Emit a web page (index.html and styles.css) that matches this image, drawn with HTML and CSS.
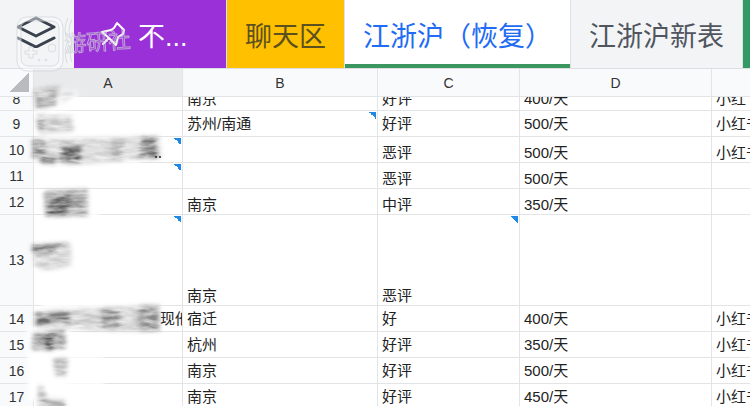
FILE: index.html
```html
<!DOCTYPE html>
<html lang="zh-CN">
<head>
    <meta charset="UTF-8">
    <meta name="viewport" content="width=device-width, initial-scale=1.0">
    <title>江浙沪（恢复）</title>
    <link rel="stylesheet" href="styles.css">
</head>
<body>
    <nav class="tabs">
        <button class="tab tab-layers" type="button" aria-label="工作表列表">
            <svg width="40" height="32" viewBox="0 0 40 32" fill="none" stroke="#39414d" stroke-width="3" stroke-linejoin="round" stroke-linecap="round">
                <path d="M19 2 L37 11 L19 20 L1 11 Z"/>
                <path d="M1 22 L19 31 L37 22"/>
            </svg>
        </button>
        <button class="tab tab-purple" type="button">
            <svg width="26" height="26" viewBox="0 0 26 26" fill="none" stroke="#fff" stroke-width="2" stroke-linejoin="round" stroke-linecap="round">
                <path d="M17 2 L24 9 L23 13 L18 16 L16 24 L9 17 L2 11 L11 9 L14 7 Z M8 18 L3 23"/>
            </svg>
            <span>不...</span>
        </button>
        <button class="tab tab-yellow" type="button">聊天区</button>
        <button class="tab tab-active" type="button">江浙沪（恢复）</button>
        <button class="tab tab-plain" type="button">江浙沪新表</button>
        <button class="tab tab-green" type="button" aria-label="下一个工作表"></button>
    </nav>

    <main class="sheet">
        <table class="grid">
            <colgroup>
                <col class="col-num"><col class="col-a"><col class="col-b"><col class="col-c"><col class="col-d"><col>
            </colgroup>
            <thead>
                <tr><th class="corner"></th><th class="selected">A</th><th>B</th><th>C</th><th>D</th><th></th></tr>
            </thead>
            <tbody>
                <tr class="cut"><th><div>8</div></th><td></td><td><div>南京</div></td><td><div>好评</div></td><td><div>400/天</div></td><td><div>小红书</div></td></tr>
                <tr><th>9</th><td></td><td class="note">苏州/南通</td><td>好评</td><td>500/天</td><td>小红书</td></tr>
                <tr class="low"><th>10</th><td class="note"></td><td></td><td>恶评</td><td>500/天</td><td>小红书</td></tr>
                <tr class="low"><th>11</th><td class="note"></td><td></td><td>恶评</td><td>500/天</td><td></td></tr>
                <tr class="low"><th>12</th><td></td><td>南京</td><td>中评</td><td>350/天</td><td></td></tr>
                <tr class="low tall"><th>13</th><td class="note"></td><td>南京</td><td class="note">恶评</td><td></td><td></td></tr>
                <tr><th>14</th><td class="tail">现他</td><td>宿迁</td><td>好</td><td>400/天</td><td>小红书</td></tr>
                <tr><th>15</th><td></td><td>杭州</td><td>好评</td><td>350/天</td><td>小红书</td></tr>
                <tr><th>16</th><td></td><td>南京</td><td>好评</td><td>500/天</td><td>小红书</td></tr>
                <tr><th>17</th><td></td><td>南京</td><td>好评</td><td>450/天</td><td>小红书</td></tr>
            </tbody>
        </table>

        <!-- 名字打码 -->
        <svg class="smudges" width="182" height="337" viewBox="0 69 182 337">
            <defs>
                <filter id="brush" x="-10%" y="-20%" width="120%" height="140%">
                    <feGaussianBlur in="SourceGraphic" stdDeviation="2" result="soft"/>
                    <feTurbulence type="fractalNoise" baseFrequency="0.06 0.25" numOctaves="3" seed="4"/>
                    <feColorMatrix values="0 0 0 0 0  0 0 0 0 0  0 0 0 0 0  1.2 0 0 0 0.1" result="streaks"/>
                    <feComposite in="soft" in2="streaks" operator="in"/>
                </filter>
                <filter id="soft"><feGaussianBlur stdDeviation="2"/></filter>
            </defs>
            <g fill="#fff" filter="url(#soft)">
                <path d="M36 88 L78 91 L74 108 L36 113 Z"/>
                <path d="M36 134 L155 134 L155 139 L36 140 Z"/>
                <path d="M36 160 L140 160 L140 165 L36 166 Z"/>
                <path d="M27 327 L70 328 L66 400 L28 400 Z"/>
                <path d="M42 303 L158 303 L158 309 L42 309 Z"/>
                <path d="M44 212 L98 212 L98 218 L44 218 Z"/>
                <path d="M50 355 L104 355 L104 359 L50 359 Z M50 381 L104 381 L104 386 L50 386 Z"/>
            </g>
            <g filter="url(#brush)">
                <path fill="#a5a5a5" d="M34 89 L60 86 L56 106 L35 109 Z"/>
                <path fill="#ddd" d="M56 89 L78 92 L62 104 Z"/>
                <path fill="#c4c4c4" d="M37 115 L72 116 L74 131 L38 134 Z"/>
                <path fill="#888" d="M37 115 L44 115 L45 129 L38 132 Z"/>
                <path fill="#d0d0d0" d="M32 139 L160 136 L161 158 L70 165 L32 158 Z"/>
                <path fill="#888" d="M32 139 L44 139 L48 158 L32 158 Z"/>
                <path fill="#555" d="M61 144 L82 145 L81 163 L60 162 Z"/>
                <path fill="#555" d="M40 157 L57 158 L55 164 L40 163 Z"/>
                <path fill="#999" d="M113 140 L125 139 L122 160 L112 158 Z"/>
                <path fill="#666" d="M142 137 L156 137 L158 158 L138 158 Z"/>
                <path fill="#999" d="M44 191 L88 189 L88 216 L45 216 Z"/>
                <path fill="#555" d="M46 207 L60 193 L72 193 L70 215 L46 216 Z"/>
                <path fill="#ccc" d="M33 245 L71 244 L72 266 L46 270 L34 266 Z"/>
                <path fill="#555" d="M32 245 L51 244 L70 243 L50 253 L32 252 Z"/>
                <path fill="#c4c4c4" d="M34 311 L160 305 L160 331 L115 331 L34 326 Z"/>
                <path fill="#666" d="M49 313 L71 312 L70 323 L36 325 L36 313 Z"/>
                <path fill="#888" d="M101 309 L119 309 L120 328 L102 328 Z"/>
                <path fill="#888" d="M139 306 L157 305 L160 331 L139 331 Z"/>
                <path fill="#888" d="M33 333 L65 330 L66 348 L32 350 Z"/>
                <path fill="#333" d="M43 334 L55 334 L54 350 L45 350 Z"/>
                <path fill="#aaa" d="M53 359 L68 358 L66 376 L55 376 Z"/>
                <path fill="#aaa" d="M38 386 L42 386 L48 399 L65 400 L66 410 L38 410 Z"/>
            </g>
            <g fill="#222"><circle cx="156" cy="157" r="1"/><circle cx="160" cy="157" r="1"/></g>
        </svg>
    </main>

    <!-- 水印 -->
    <svg class="watermark" width="140" height="74" viewBox="0 0 140 74" fill="none" stroke="#cfd2d6">
        <g stroke="#fff" stroke-width="4" opacity="0.6"><rect x="19" y="19" width="42" height="49" rx="9"/></g>
        <rect x="17" y="17" width="46" height="54" rx="10"/>
        <rect x="21" y="21" width="38" height="45" rx="7"/>
        <path d="M29 47 h4 v4 h4 v3 h-4 v4 h-4 v-4 h-4 v-3 h4 Z"/>
        <circle cx="52" cy="48" r="4"/>
        <circle cx="39" cy="60" r="1"/><circle cx="46" cy="60" r="1"/>
        <path d="M68 18 q-6 12 0 23 q-5 10 -1 22 M72 19 q-6 12 0 23 q-4 10 0 20"/>
        <text x="65" y="52" transform="rotate(-4 65 52)">游研社</text>
    </svg>
</body>
</html>
```

FILE: styles.css
```css
* {
    box-sizing: border-box;
}
body {
    margin: 0;
    height: 100vh;
    overflow: hidden;
    background: #fff;
    color: #222;
    font-family: "Liberation Sans", "Noto Sans CJK SC", sans-serif;
}

/* 顶部标签栏 */
.tabs {
    display: flex;
    height: 69px;
    overflow: hidden;
    background: #f2f4f6;
    border-bottom: 1px solid #dcdee1;
}
.tab {
    display: flex;
    flex: none;
    align-items: center;
    justify-content: center;
    padding: 0 18px;
    border: 0;
    border-right: 1px solid #dfe2e5;
    background: #f2f4f6;
    color: #50555e;
    font: inherit;
    font-size: 27px;
    white-space: nowrap;
}
.tab-layers {
    width: 74px;
    padding: 0 0 4px;
    border: 0;
}
.tab-purple {
    gap: 12px;
    justify-content: flex-start;
    width: 153px;
    padding-left: 26px;
    background: #9a31d8;
    color: #fff;
}
.tab-yellow {
    background: #ffc000;
    color: #5c501f;
}
.tab-active {
    background: #fff;
    color: #216bf5;
    box-shadow: inset 0 -4px #3b965f;
}
.tab-green {
    flex: 1;
    background: #349964;
}

/* 表格 */
.sheet {
    position: relative;
    overflow: hidden;
}
.grid {
    width: 100%;
    table-layout: fixed;
    border-collapse: separate;
    border-spacing: 0;
    font-size: 15px;
    line-height: 18px;
}
.col-num {
    width: 34px;
}
.col-a {
    width: 149px;
}
.col-b {
    width: 195px;
}
.col-c {
    width: 142px;
}
.col-d {
    width: 192px;
}
.grid th,
.grid td {
    height: 26px;
    padding: 0 4px;
    overflow: hidden;
    border-right: 1px solid #e3e4e6;
    border-bottom: 1px solid #e3e4e6;
    text-align: left;
    white-space: nowrap;
}
.grid tr > :last-child {
    border-right: 0;
}
.grid th {
    padding: 0;
    background: #f9fafc;
    color: #333;
    font-size: 14px;
    font-weight: normal;
    text-align: center;
}
.grid thead th {
    height: 28px;
}
.grid thead .selected {
    background: #e9eaec;
}
.grid .corner {
    background: linear-gradient(135deg, transparent 50%, #b9bbbe 50%) 10px 4px / 19px 19px no-repeat #f9fafc;
}
.grid .cut th,
.grid .cut td {
    height: 14px;
}
.cut div {
    display: flex;
    align-items: flex-end;
    height: 13px;
    padding-bottom: 2px;
    overflow: hidden;
}
.cut th div {
    justify-content: center;
}
.grid .low td {
    vertical-align: bottom;
}
.grid .tall td {
    height: 91px;
}
.grid .tail {
    padding: 0 0 0 126px;
}
.grid .note {
    background: linear-gradient(45deg, transparent 50%, #2089e5 50%) right 1px top 1px / 7px 7px no-repeat;
}
.smudges {
    position: absolute;
    top: 0;
    left: 0;
}
.watermark {
    position: absolute;
    top: 0;
    left: 0;
    opacity: 0.7;
}
.watermark text {
    font-family: "Noto Sans CJK SC", sans-serif;
    font-size: 22px;
}
```
